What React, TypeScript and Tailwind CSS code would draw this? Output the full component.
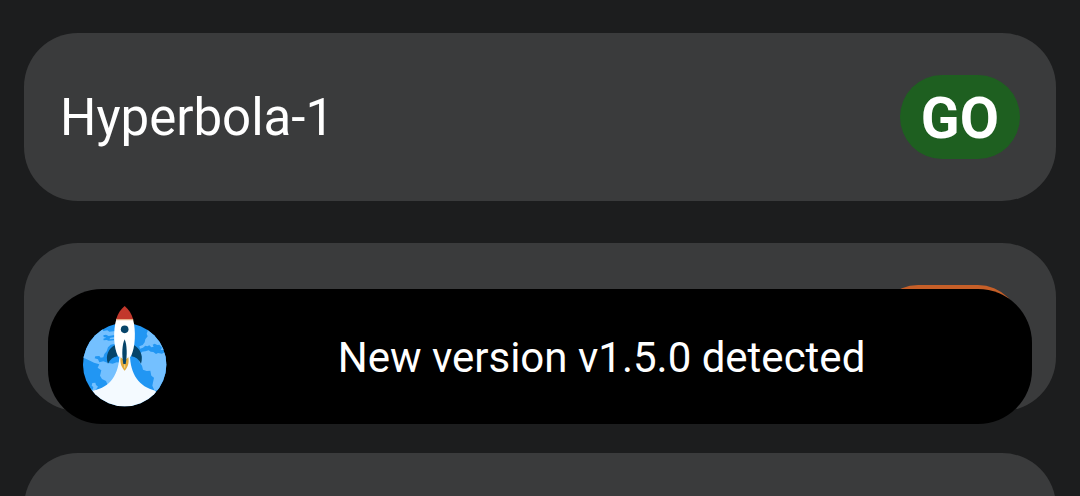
type Status = "go" | "tbd";

const badgeColors: Record<Status, string> = {
  go: "bg-[#1e5f20] px-[21px]",
  tbd: "bg-[#c65f28] w-36",
};

function StatusBadge({ status, label }: { status: Status; label?: string }) {
  return (
    <span
      className={`flex h-[84px] items-center justify-center rounded-full pt-1 text-[57px] leading-[80px] font-bold ${badgeColors[status]}`}
    >
      {label}
    </span>
  );
}

function LaunchCard({ name, status, label }: { name?: string; status?: Status; label?: string }) {
  return (
    <li className="flex h-[168px] shrink-0 items-center justify-between rounded-[54px] bg-[#3a3b3c] px-9">
      <h2 className="pt-0.5 text-[51px] leading-[60px] font-normal">{name}</h2>
      {status && <StatusBadge status={status} label={label} />}
    </li>
  );
}

function RocketLogo() {
  return (
    <svg viewBox="39 33 252 303" className="h-[101px] w-[84px] shrink-0" aria-hidden="true">
      <defs>
        <clipPath id="globe">
          <circle cx="164" cy="209" r="125" />
        </clipPath>
      </defs>
      <g clipPath="url(#globe)">
        <rect x="36" y="80" width="260" height="260" fill="#2196f3" />
        <path
          fill="#74c0ff"
          d="M30 188 L44 190 L60 197 L72 203 L88 208 L83 218 L94 226 L90 242 L96 252 L108 258 L112 268 L130 276 L160 240 L164 205 L140 202 L128 206 L112 203 L100 199 L88 202 L84 193 L74 190 L76 184 L88 183 L92 188 L100 187 L103 177 L110 169 L114 157 L122 149 L136 146 L136 108 L118 110 L112 106 L100 108 L96 98 L30 120 Z"
        />
        <path
          fill="#2196f3"
          d="M100 121 L108 119 L116 123 L134 120 L134 126 L121 128 L118 133 L132 132 L132 136 L116 137 L110 135 L101 136 L100 131 L109 128 L101 126 Z"
        />
        <path fill="#74c0ff" d="M60 282 L68 284 L70 276 L65 272 L67 264 L76 263 L78 270 L84 275 L76 286 L60 292 Z" />
        <path
          fill="#74c0ff"
          d="M232 96 L233 108 L230 116 L233 124 L226 133 L224 142 L218 150 L208 154 L210 161 L219 158 L226 152 L232 154 L238 151 L244 157 L251 155 L248 149 L254 146 L262 150 L268 149 L276 158 L272 165 L300 164 L300 90 Z"
        />
        <path
          fill="#74c0ff"
          d="M300 172 L286 170 L276 176 L264 174 L258 177 L250 171 L242 170 L236 166 L226 169 L216 170 L210 177 L216 185 L209 192 L208 201 L216 212 L219 224 L230 228 L241 227 L244 242 L252 248 L249 262 L247 272 L253 286 L300 290 Z"
        />
        <path fill="#f4faff" d="M148 178 C148 238 120 279 68 287 L40 350 H290 L256 287 C208 276 180 238 180 178 Z" />
      </g>
      <path fill="#064469" d="M136 149 C116 159 105 181 114 206 C120 193 130 186 143 184 Z M190 149 C210 159 221 181 213 206 C207 193 197 186 184 184 Z" />
      <path fill="#e0a93b" d="M152 187 C149 204 155 218 164 227 C173 218 178 204 175 187 L169 192 L164 184 L158 192 Z" />
      <path fill="#f3d37c" d="M164 206 C161 211 161 217 164 221 C167 217 167 211 164 206 Z" />
      <path fill="#ffffff" d="M139 73 C129 105 130 160 145 185 C158 182 170 182 182 185 C197 160 198 105 189 73 Z" />
      <path fill="#e7b08a" d="M139 71 H189 L190 76 H138 Z" />
      <path fill="#c2382c" d="M164 33 C152 43 143 57 139 72 H189 C185 57 176 43 164 33 Z" />
      <circle cx="164" cy="103" r="11.5" fill="#064469" />
      <path fill="#064469" d="M164 133 C156 148 155 181 160 207 H167 C172 181 171 148 164 133 Z" />
    </svg>
  );
}

export default function App() {
  return (
    <main className="relative h-screen overflow-hidden bg-[#1c1d1e] px-6 pt-[33px] font-['Roboto',sans-serif] text-white">
      <ul className="flex flex-col gap-[42px]">
        <LaunchCard name="Hyperbola-1" status="go" label="GO" />
        <LaunchCard status="tbd" />
        <LaunchCard />
      </ul>
      <div
        role="status"
        className="absolute inset-x-12 bottom-[72px] flex h-[135px] items-center gap-9 rounded-[54px] bg-black pr-8 pl-[35px]"
      >
        <RocketLogo />
        <p className="grow pt-0.5 text-center text-[42px] leading-[50px]">New version v1.5.0 detected</p>
      </div>
    </main>
  );
}
